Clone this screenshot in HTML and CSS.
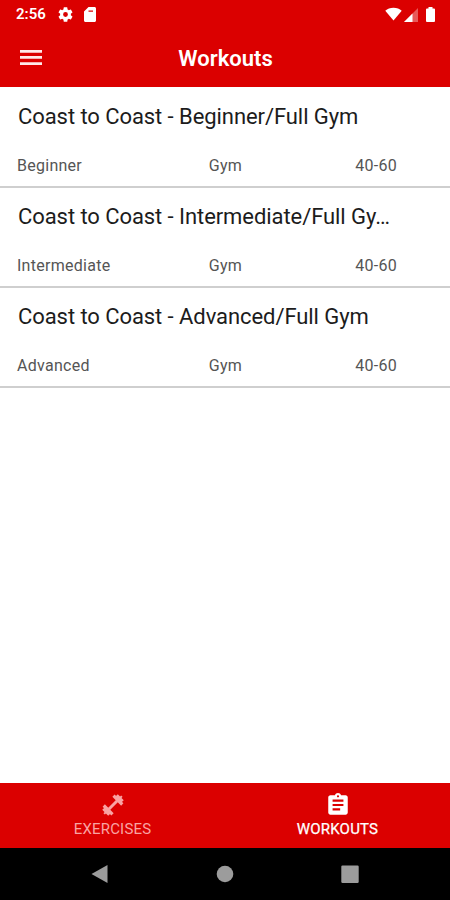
FILE: index.html
```html
<!DOCTYPE html>
<html lang="en">
<head>
  <meta charset="UTF-8">
  <meta name="viewport" content="width=device-width, initial-scale=1.0">
  <title>Workouts</title>
  <link rel="stylesheet" href="styles.css">
</head>
<body>

  <div class="screen">
    <!-- Status bar -->
    <div class="status-bar">
      <span class="time">2:56</span>
      <svg class="icon-settings" viewBox="2 2 20 20"><path d="M19.14 12.94c.04-.3.06-.61.06-.94 0-.32-.02-.64-.07-.94l2.03-1.58a.49.49 0 0 0 .12-.61l-1.92-3.32a.49.49 0 0 0-.59-.22l-2.39.96a7 7 0 0 0-1.62-.94l-.36-2.54a.48.48 0 0 0-.48-.41h-3.84a.47.47 0 0 0-.47.41l-.36 2.54c-.59.24-1.13.57-1.62.94l-2.39-.96a.47.47 0 0 0-.59.22L2.74 8.87a.48.48 0 0 0 .12.61l2.03 1.58a6 6 0 0 0 0 1.88l-2.03 1.58a.49.49 0 0 0-.12.61l1.92 3.32c.12.22.37.29.59.22l2.39-.96c.5.38 1.03.7 1.62.94l.36 2.54c.05.24.24.41.48.41h3.84c.24 0 .44-.17.47-.41l.36-2.54a7 7 0 0 0 1.62-.94l2.39.96c.22.08.47 0 .59-.22l1.92-3.32a.47.47 0 0 0-.12-.61zM12 15.2a3.2 3.2 0 1 1 0-6.4 3.2 3.2 0 0 1 0 6.4z"/></svg>
      <svg class="icon-sd" viewBox="4 2 16 20"><path d="M18 2h-8L4 8v12c0 1.100.9 2 2 2h12c1.100 0 2-.9 2-2V4c0-1.100-.9-2-2-2zM10 6.500h6v1.800h-6z" fill-rule="evenodd"/></svg>
      <div class="status-right">
        <svg class="icon-wifi" viewBox="0 0 18 14"><path d="M9 14 .3 3.500C2.500 1.500 5.500.3 9 .3s6.500 1.200 8.700 3.200z"/></svg>
        <svg class="icon-signal" viewBox="0 0 14 14"><path d="M0 14 14 0v14z" opacity=".35"/><path d="M0 14 8.500 5.500V14z"/></svg>
        <svg class="icon-battery" viewBox="0 0 9 15"><path d="M2.500 0h4v1.500H8a1 1 0 0 1 1 1V14a1 1 0 0 1-1 1H1a1 1 0 0 1-1-1V2.500a1 1 0 0 1 1-1h1.500z"/></svg>
      </div>
    </div>

    <!-- Header -->
    <header class="app-bar">
      <button class="menu-btn" aria-label="Menu">
        <svg viewBox="0 0 22 15"><path d="M0 0h22v2.700H0zM0 6.100h22v2.700H0zM0 12.200h22v2.700H0z"/></svg>
      </button>
      <h1>Workouts</h1>
    </header>

    <!-- Workout list -->
    <main class="list">
      <div class="workout">
        <h2>Coast to Coast - Beginner/Full Gym</h2>
        <div class="details">
          <span>Beginner</span>
          <span>Gym</span>
          <span>40-60</span>
        </div>
      </div>
      <div class="workout">
        <h2>Coast to Coast - Intermediate/Full Gy…</h2>
        <div class="details">
          <span>Intermediate</span>
          <span>Gym</span>
          <span>40-60</span>
        </div>
      </div>
      <div class="workout">
        <h2>Coast to Coast - Advanced/Full Gym</h2>
        <div class="details">
          <span>Advanced</span>
          <span>Gym</span>
          <span>40-60</span>
        </div>
      </div>
    </main>

    <!-- Tabs -->
    <nav class="tabs">
      <div class="tab">
        <svg viewBox="0 0 24 24"><g transform="rotate(-45 12 12)"><path d="M6 10.500h12v3H6z"/><path d="M3.500 5.800h3.200v12.400H3.500zM17.300 5.800h3.200v12.400h-3.200zM1 7.800h3v8.400H1zM20 7.800h3v8.400h-3zM-.5 11H1v2H-.5zM23 11h1.500v2H23z"/></g></svg>
        <span>EXERCISES</span>
      </div>
      <div class="tab active">
        <svg viewBox="0 0 24 24"><path d="M19 3h-4.180C14.400 1.840 13.300 1 12 1s-2.400.84-2.820 2H5c-1.100 0-2 .9-2 2v14c0 1.100.9 2 2 2h14c1.100 0 2-.9 2-2V5c0-1.100-.9-2-2-2zm-7 0a1 1 0 1 1 0 2 1 1 0 0 1 0-2zm2 14H7v-2h7v2zm3-4H7v-2h10v2zm0-4H7V7h10v2z"/></svg>
        <span>WORKOUTS</span>
      </div>
    </nav>

    <!-- System navigation -->
    <div class="nav-bar">
      <svg viewBox="0 0 20 20"><path d="M1.500 10 17.500 1v18z"/></svg>
      <svg viewBox="0 0 20 20"><circle cx="10" cy="10" r="8.300"/></svg>
      <svg viewBox="0 0 20 20"><rect x="1.300" y="1.500" width="17.400" height="17.400" rx="1.200"/></svg>
    </div>
  </div>

</body>
</html>
```
FILE: styles.css
```css
body {
  margin: 0;
  font-family: Roboto, sans-serif;
  background-color: #fff;
}

svg {
  display: block;
  fill: currentColor;
}

.screen {
  display: flex;
  flex-direction: column;
  width: 450px;
  height: 900px;
  overflow: hidden;
}

.status-bar {
  display: flex;
  align-items: center;
  height: 28px;
  padding: 0 15px 0 16px;
  background-color: #db0000;
  color: #fff;
}

.time {
  width: 42px;
  font-size: 15px;
  font-weight: 600;
}

.icon-settings {
  width: 15px;
  height: 15px;
}

.icon-sd {
  width: 12px;
  height: 15px;
  margin-left: 11px;
}

.status-right {
  display: flex;
  align-items: center;
  margin-left: auto;
}

.icon-wifi {
  width: 17px;
  height: 14px;
}

.icon-signal {
  width: 14px;
  height: 14px;
  margin: 1px 8px 0 2px;
}

.icon-battery {
  width: 9px;
  height: 15px;
}

.app-bar {
  display: grid;
  grid-template-columns: 60px 1fr 60px;
  align-items: center;
  height: 59px;
  background-color: #db0000;
  color: #fff;
}

.menu-btn {
  padding: 0 0 0 20px;
  border: none;
  background: none;
  color: #ffe9e9;
}

.menu-btn svg {
  width: 22px;
  height: 15px;
}

.app-bar h1 {
  margin: 2px 0 0 1px;
  font-size: 22px;
  font-weight: 600;
  line-height: 26px;
  text-align: center;
}

.list {
  flex: 1;
  padding-top: 1px;
}

.workout {
  box-sizing: border-box;
  height: 100px;
  padding: 15px 17px 0;
  border-bottom: 2px solid #cfcfcf;
}

.workout h2 {
  margin: 0 0 24px 1px;
  font-size: 22px;
  font-weight: 400;
  line-height: 28px;
  letter-spacing: -0.07px;
  white-space: nowrap;
  color: #1c1c1c;
}

.details {
  display: grid;
  grid-template-columns: 160px 97px 1fr;
  padding-right: 36px;
  font-size: 16px;
  line-height: 22px;
  letter-spacing: 0.27px;
  color: #555;
}

.details span:nth-child(2) {
  text-align: center;
}

.details span:nth-child(3) {
  text-align: right;
}

.tabs {
  display: flex;
  height: 65px;
  background-color: #db0000;
}

.tab {
  display: flex;
  flex: 1;
  flex-direction: column;
  align-items: center;
  padding-top: 9px;
  font-size: 15px;
  line-height: 22px;
  letter-spacing: 0.2px;
  color: #f9a3a3;
}

.tab svg {
  width: 26px;
  height: 26px;
}

.tab.active {
  color: #fff;
  -webkit-text-stroke: 0.25px #fff;
}

.tab:first-child svg {
  width: 24px;
  height: 24px;
  margin: 1px 0;
}

.nav-bar {
  display: flex;
  align-items: center;
  justify-content: center;
  gap: 105px;
  height: 52px;
  background-color: #000;
  color: #9c9c9c;
}

.nav-bar svg {
  width: 20px;
  height: 20px;
}
```
